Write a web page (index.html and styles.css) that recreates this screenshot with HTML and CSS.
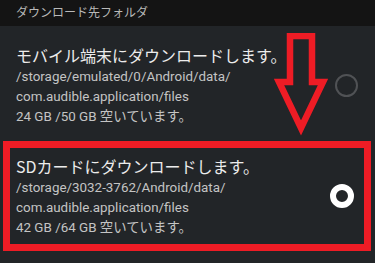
FILE: index.html
```html
<!DOCTYPE html>
<html>
<head>
    <title>ダウンロード先フォルダ</title>
    <link rel="stylesheet" href="styles.css">
</head>
<body>
    <div class="screen">
        <div class="header">ダウンロード先フォルダ</div>

        <div class="option">
            <div class="option-text">
                <div class="option-title">モバイル端末にダウンロードします。</div>
                <div class="option-sub">/storage/emulated/0/Android/data/</div>
                <div class="option-sub">com.audible.application/files</div>
                <div class="option-sub">24 GB /50 GB 空いています。</div>
            </div>
            <div class="radio"></div>
        </div>

        <div class="option selected">
            <div class="option-text">
                <div class="option-title">SDカードにダウンロードします。</div>
                <div class="option-sub">/storage/3032-3762/Android/data/</div>
                <div class="option-sub">com.audible.application/files</div>
                <div class="option-sub">42 GB /64 GB 空いています。</div>
            </div>
            <div class="radio checked"></div>
        </div>

        <!-- annotation arrow -->
        <svg class="arrow" width="60" height="106" viewBox="0 0 60 106">
            <polygon points="17,3 39,3 39,49 50,49 28,95 6,49 17,49" fill="none" stroke="#ee1c25" stroke-width="6.5" stroke-linejoin="miter"/>
        </svg>
    </div>
</body>
</html>
```

FILE: styles.css
```css
body {
    margin: 0;
    background-color: #1d1e20;
    font-family: Roboto, "Noto Sans CJK JP", sans-serif;
}

.screen {
    position: relative;
    width: 375px;
    height: 263px;
    overflow: hidden;
    background-color: #222528;
}

.header {
    height: 26px;
    line-height: 26px;
    padding-left: 16px;
    background-color: #141414;
    color: #b9b9b9;
    font-size: 12px;
}

.option {
    display: flex;
    align-items: center;
    justify-content: space-between;
    padding: 17px 16px 14px 16px;
}

.option-title {
    font-size: 16px;
    line-height: 24px;
    color: #ececec;
    font-family: "Noto Sans CJK JP", Roboto, sans-serif;
}

.option-sub {
    font-size: 13.4px;
    line-height: 20px;
    color: #c4c4c4;
}

.selected {
    margin: 0 4px 0 3px;
    padding: 6px 5px 6px 6px;
    border: 7px solid #ee1c25;
}

.radio {
    width: 19px;
    height: 19px;
    border: 2px solid #505255;
    border-radius: 50%;
    margin-right: 1px;
}

.radio.checked {
    width: 12px;
    height: 12px;
    border: 6px solid #ffffff;
    background-color: #222528;
    margin-right: 5px;
}

.arrow {
    position: absolute;
    left: 273px;
    top: 33px;
}
```
